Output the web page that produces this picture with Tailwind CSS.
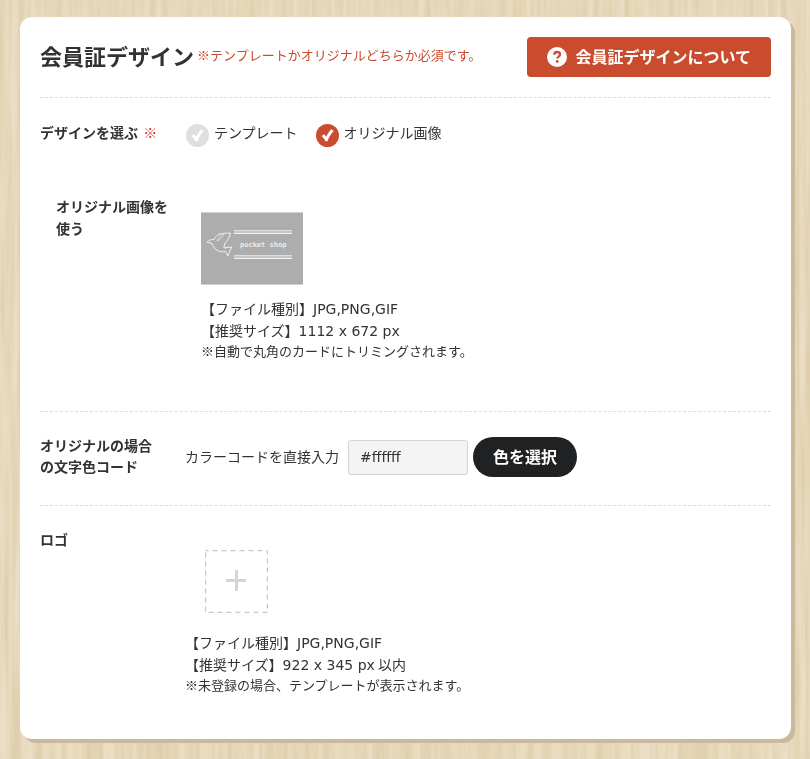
<!DOCTYPE html>
<html lang="ja">
<head>
<meta charset="UTF-8" />
<meta name="viewport" content="width=device-width, initial-scale=1">
<title>会員証デザイン</title>
<script src="https://cdn.jsdelivr.net/npm/@tailwindcss/browser@4"></script>
</head>
<body class="relative min-h-screen bg-[#e7d9bd] pt-[17px] pb-5 pl-5 pr-[19px] font-['Noto_Sans_CJK_JP',sans-serif] text-[14px] leading-[22px] text-[#333]">

<!-- wood grain -->
<svg class="fixed inset-0 -z-10 w-full h-full" aria-hidden="true">
  <filter id="grain" x="0" y="0" width="100%" height="100%" color-interpolation-filters="sRGB">
    <feTurbulence type="fractalNoise" baseFrequency="0.16 0.006" numOctaves="3" seed="4" />
    <feColorMatrix values="0 0 0 0 0.87  0 0 0 0 0.80  0 0 0 0 0.66  1.6 0 0 0 -0.4" />
  </filter>
  <rect width="100%" height="100%" fill="#ebdec5" />
  <rect width="100%" height="100%" filter="url(#grain)" />
</svg>

<main class="rounded-xl bg-white px-5 pt-5 pb-11 shadow-[4px_4px_0_#c9ba9d]">

  <header class="flex items-center justify-between border-b border-dashed border-[#ddd] pb-5">
    <div class="flex items-center gap-[3px] pb-1">
      <h1 class="text-[22px] leading-9 font-bold">会員証デザイン</h1>
      <p class="text-[13px] text-[#c94c2e]">※テンプレートかオリジナルどちらか必須です。</p>
    </div>
    <button type="button" class="flex h-10 items-center gap-2 rounded bg-[#c94c2e] px-5 text-[16px] font-bold text-white">
      <svg class="size-5" viewBox="0 0 20 20" fill="none" aria-hidden="true">
        <circle cx="10" cy="10" r="10" fill="#fff" />
        <path d="M7.2 7.8C7.3 5.9 8.4 5 10.1 5c1.700 0 2.900 1 2.900 2.500 0 2.200-2.700 2-2.700 4.100" stroke="#c94c2e" stroke-width="2.300" />
        <circle cx="10.200" cy="14.500" r="1.400" fill="#c94c2e" />
      </svg>
      <span class="pb-0.5">会員証デザインについて</span>
    </button>
  </header>

  <section class="border-b border-dashed border-[#ddd] pt-[23px] pb-[50px]">
    <fieldset>
      <legend class="float-left w-[145px] font-bold">デザインを選ぶ <span class="ml-0.5 text-[#c33]">※</span></legend>
      <div class="flex gap-[18px]">
        <label class="flex items-start gap-[5px]">
          <span class="relative mt-[3px] ml-px size-[23px]">
            <input type="radio" name="design" class="block size-[23px] appearance-none rounded-full bg-[#dfdfdf] checked:bg-[#c94c2e]">
            <svg class="pointer-events-none absolute inset-0" viewBox="0 0 23 23" aria-hidden="true"><path d="M5.500 12L8.200 10.200 10.200 12.800C11.600 9.800 13.200 7.200 15.200 5.200L17.800 7C14.800 10 13 13.200 11.500 17.200L9.500 17.300C8.500 15.300 7.300 13.600 5.500 12Z" fill="#fff" /></svg>
          </span>
          テンプレート
        </label>
        <label class="flex items-start gap-[5px]">
          <span class="relative mt-[3px] size-[23px]">
            <input type="radio" name="design" checked class="block size-[23px] appearance-none rounded-full bg-[#dfdfdf] checked:bg-[#c94c2e]">
            <svg class="pointer-events-none absolute inset-0" viewBox="0 0 23 23" aria-hidden="true"><path d="M5.500 12L8.200 10.200 10.200 12.800C11.600 9.800 13.200 7.200 15.200 5.200L17.800 7C14.800 10 13 13.200 11.500 17.200L9.500 17.300C8.500 15.300 7.300 13.600 5.500 12Z" fill="#fff" /></svg>
          </span>
          オリジナル画像
        </label>
      </div>
    </fieldset>

    <div class="mt-12 flex pl-4">
      <h2 class="w-[145px] shrink-0 pr-7 font-bold">オリジナル画像を使う</h2>
      <div class="pt-[17px]">
        <!-- card thumbnail -->
        <svg class="block h-[73px] w-[102px]" viewBox="0 0 102 73" fill="none" role="img" aria-label="pocket shop">
          <rect width="102" height="73" fill="#adadad" />
          <path d="M0 .5h102M0 72.500h102" stroke="#d0d0d0" />
          <path d="M33 18.500h58M33 43.500h58" stroke="#dedede" />
          <path d="M33 20h58M33 45h58" stroke="#c6c6c6" stroke-width="2" />
          <path d="M33 21.500h58M33 46.500h58" stroke="#f2f2f2" />
          <path d="M6 30C8 28 9.500 27.500 13 27.500C15 23 18 21.500 22 21.500C24.500 21 27 21 29.500 21C29 25 26 29 23.500 32L23 36L31 35L29 38.500L27 44L24.500 39.500C18 41 12.500 37 11 31.500Z" stroke="#f0f0f0" stroke-linejoin="round" />
          <path d="M22 21.500C19 23 17 26 16 29C19 28 21 25 23 21.500" stroke="#e6e6e6" stroke-width=".8" />
          <text x="39" y="35" font-family="DejaVu Sans Mono, monospace" font-size="7" font-weight="700" fill="#ececec">pocket shop</text>
        </svg>
        <p class="mt-3">【ファイル種別】<span class="font-['DejaVu_Sans',sans-serif] leading-none">JPG,PNG,GIF</span></p>
        <p>【推奨サイズ】<span class="font-['DejaVu_Sans',sans-serif] leading-none">1112 x 672 px</span></p>
        <p class="text-[13px] leading-5">※自動で丸角のカードにトリミングされます。</p>
      </div>
    </div>
  </section>

  <section class="flex border-b border-dashed border-[#ddd] pt-[23px] pb-7">
    <h2 class="w-[145px] shrink-0 pr-7 leading-[21px] font-bold">オリジナルの場合の文字色コード</h2>
    <div class="flex items-center gap-[5px] pt-0.5">
      <label for="color" class="pr-1 pb-0.5">カラーコードを直接入力</label>
      <input id="color" type="text" value="#ffffff" class="h-[35px] w-[120px] rounded-[3px] border border-[#d5d5d5] bg-[#f4f4f4] px-[11px] font-['DejaVu_Sans',sans-serif]">
      <button type="button" class="h-10 rounded-full bg-[#1f2122] px-5 pb-0.5 text-[16px] font-bold text-white">色を選択</button>
    </div>
  </section>

  <section class="flex pt-[22px]">
    <h2 class="w-[145px] shrink-0 font-bold">ロゴ</h2>
    <div class="pt-[22px]">
      <button type="button" aria-label="ロゴを追加" class="ml-5 block">
        <svg class="block size-[63px]" viewBox="0 0 63 63" fill="none" aria-hidden="true">
          <rect x=".5" y=".5" width="62" height="62" stroke="#c8c8c8" stroke-width="1.500" stroke-dasharray="5 4" stroke-dashoffset="2" />
          <path d="M21 30.500h20M31.500 20v21" stroke="#d5d5d5" stroke-width="3" />
        </svg>
      </button>
      <p class="mt-[18px]">【ファイル種別】<span class="font-['DejaVu_Sans',sans-serif] leading-none">JPG,PNG,GIF</span></p>
      <p>【推奨サイズ】<span class="font-['DejaVu_Sans',sans-serif] leading-none">922 x 345 px</span> 以内</p>
      <p class="text-[13px] leading-5">※未登録の場合、テンプレートが表示されます。</p>
    </div>
  </section>

</main>
</body>
</html>
